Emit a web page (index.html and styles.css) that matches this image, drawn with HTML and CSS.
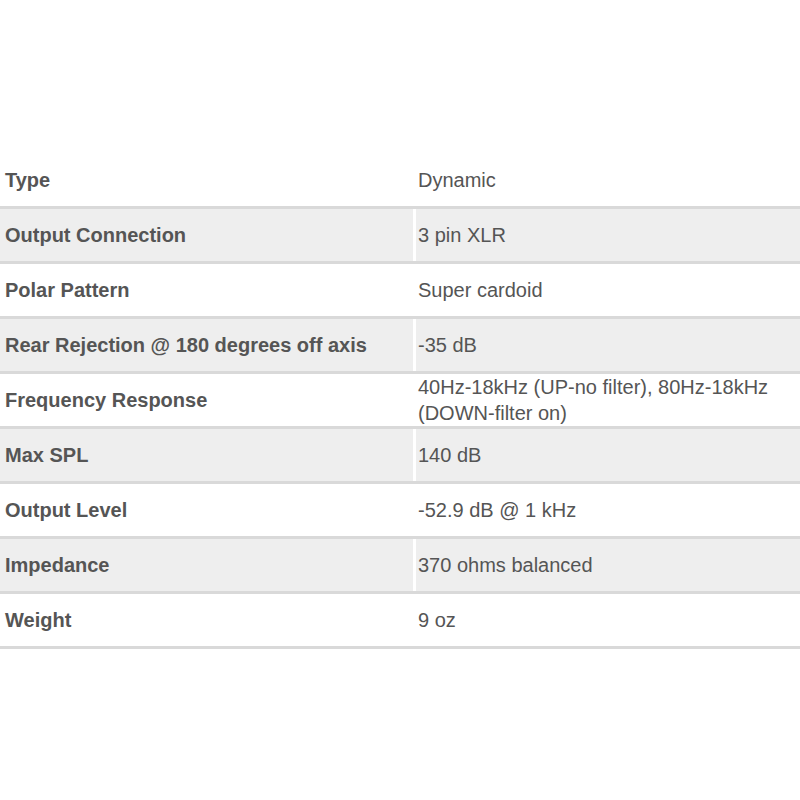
FILE: index.html
```html
<!DOCTYPE html>
<html>
<head>
<meta charset="utf-8">
<link rel="stylesheet" href="styles.css">
</head>
<body>
<div class="wrap">
<table class="specs">
<tbody>
<tr><td class="label">Type</td><td class="value">Dynamic</td></tr>
<tr class="alt"><td class="label">Output Connection</td><td class="value">3 pin XLR</td></tr>
<tr><td class="label">Polar Pattern</td><td class="value">Super cardoid</td></tr>
<tr class="alt"><td class="label">Rear Rejection @ 180 degrees off axis</td><td class="value">-35 dB</td></tr>
<tr><td class="label">Frequency Response</td><td class="value">40Hz-18kHz (UP-no filter), 80Hz-18kHz (DOWN-filter on)</td></tr>
<tr class="alt"><td class="label">Max SPL</td><td class="value">140 dB</td></tr>
<tr><td class="label">Output Level</td><td class="value">-52.9 dB @ 1 kHz</td></tr>
<tr class="alt"><td class="label">Impedance</td><td class="value">370 ohms balanced</td></tr>
<tr><td class="label">Weight</td><td class="value">9 oz</td></tr>
</tbody>
</table>
</div>
</body>
</html>
```

FILE: styles.css
```css
html, body {
  margin: 0;
  padding: 0;
  background: #ffffff;
}
.wrap {
  padding-top: 154px;
}
.specs {
  width: 800px;
  border-collapse: separate;
  border-spacing: 0;
  table-layout: fixed;
  font-family: "Liberation Sans", Arial, sans-serif;
  font-size: 20px;
  line-height: 26px;
  color: #555555;
}
.specs td {
  height: 52px;
  padding: 0;
  vertical-align: middle;
  border-bottom: 3px solid #d9d9d9;
}
.specs .label {
  width: 408px;
  padding-left: 5px;
  font-weight: bold;
}
.specs .value {
  padding-left: 5px;
  padding-right: 8px;
}
.specs tr.alt td {
  background: #eeeeee;
}
.specs tr.alt .value {
  box-shadow: inset 3px 0 0 #ffffff;
}
```
